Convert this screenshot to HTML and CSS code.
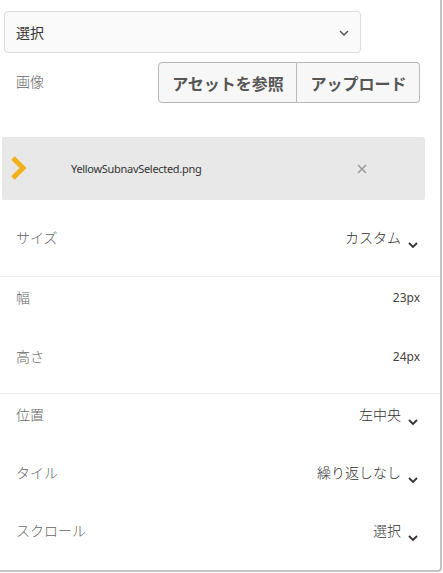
FILE: index.html
```html
<!DOCTYPE html>
<html lang="ja">
<head>
<meta charset="utf-8">
<link rel="stylesheet" href="styles.css">
</head>
<body>
<div class="panel">
  <div class="select">
    <span>選択</span>
    <svg class="sel-chev" width="12" height="8" viewBox="0 0 12 8"><path d="M2 2 L6 6 L10 2" fill="none" stroke="#555" stroke-width="1.5"/></svg>
  </div>
  <div class="image-row">
    <span class="label">画像</span>
    <div class="btns">
      <button class="btn">アセットを参照</button>
      <button class="btn">アップロード</button>
    </div>
  </div>
  <div class="file">
    <svg class="file-chev" width="18" height="24" viewBox="0 0 18 24"><path d="M3 2 L13 12 L3 22" fill="none" stroke="#f2b019" stroke-width="5"/></svg>
    <span class="fname">YellowSubnavSelected.png</span>
    <svg class="close" width="10" height="10" viewBox="0 0 10 10"><path d="M1 1 L9 9 M9 1 L1 9" stroke="#9a9a9a" stroke-width="1.5"/></svg>
  </div>
  <div class="group g1">
    <div class="row"><span class="label">サイズ</span><span class="value">カスタム<svg class="chev" width="14" height="8" viewBox="0 0 14 8"><path d="M3 2 L7 6 L11 2" fill="none" stroke="#333" stroke-width="1.8"/></svg></span></div>
  </div>
  <div class="group g2">
    <div class="row"><span class="label">幅</span><span class="num">23px</span></div>
    <div class="row"><span class="label">高さ</span><span class="num">24px</span></div>
  </div>
  <div class="group g3">
    <div class="row"><span class="label">位置</span><span class="value">左中央<svg class="chev" width="14" height="8" viewBox="0 0 14 8"><path d="M3 2 L7 6 L11 2" fill="none" stroke="#333" stroke-width="1.8"/></svg></span></div>
    <div class="row"><span class="label">タイル</span><span class="value">繰り返しなし<svg class="chev" width="14" height="8" viewBox="0 0 14 8"><path d="M3 2 L7 6 L11 2" fill="none" stroke="#333" stroke-width="1.8"/></svg></span></div>
    <div class="row"><span class="label">スクロール</span><span class="value">選択<svg class="chev" width="14" height="8" viewBox="0 0 14 8"><path d="M3 2 L7 6 L11 2" fill="none" stroke="#333" stroke-width="1.8"/></svg></span></div>
  </div>
</div>
</body>
</html>
```
FILE: styles.css
```css
* { box-sizing: border-box; }
body {
  margin: 0;
  background: #fff;
  font-family: "Noto Sans", "Noto Sans CJK JP", sans-serif;
  color: #333;
}
.panel {
  width: 442px;
  height: 572px;
  border-right: 2px solid #c4c4c4;
  border-bottom: 2px solid #c4c4c4;
  border-bottom-right-radius: 4px;
  padding-top: 11px;
  display: flex;
  flex-direction: column;
}
.select {
  margin-left: 4px;
  width: 357px;
  height: 42px;
  border: 1px solid #dcdcdc;
  border-radius: 4px;
  background: #fafafa;
  display: flex;
  align-items: center;
  justify-content: space-between;
  padding: 0 10px 0 11px;
  font-size: 14px;
  color: #333;
}
.sel-chev { margin-top: 2px; }
.image-row {
  margin-top: 9px;
  display: flex;
  align-items: center;
  padding: 0 20px 0 16px;
}
.label {
  font-size: 14px;
  font-weight: 300;
  color: #666;
}
.image-row .label { margin-top: -4px; }
.btns {
  margin-left: auto;
  display: flex;
}
.btn {
  height: 41px;
  border: 1px solid #b8b8b8;
  background: #f7f7f7;
  font-family: "Noto Sans CJK JP", sans-serif;
  font-weight: bold;
  font-size: 16px;
  color: #555;
  padding: 0 11px 0 12px;
}
.btn:first-child {
  border-radius: 4px 0 0 4px;
  width: 139px;
}
.btn:last-child {
  border-left: none;
  border-radius: 0 4px 4px 0;
  width: 123px;
}
.file {
  margin-top: 34px;
  margin-left: 2px;
  width: 423px;
  height: 63px;
  background: #e8e8e8;
  border-radius: 2px;
  display: flex;
  align-items: center;
  padding-left: 8px;
}
.file-chev { margin-top: -2px; }
.fname {
  margin-left: 43px;
  font-size: 11px;
  color: #333;
  letter-spacing: -0.3px;
}
.close {
  margin-left: auto;
  margin-right: 58px;
}
.group {
  display: flex;
  flex-direction: column;
}
.g1 { padding: 16px 0 18px; }
.g2 { border-top: 1px solid #eee; gap: 18px; padding-bottom: 16px; }
.g3 { border-top: 1px solid #eee; gap: 17px; }
.g2 .row, .g3 .row { margin-top: -1px; }
.row {
  height: 42px;
  display: flex;
  align-items: center;
  justify-content: space-between;
  padding: 0 20px 0 16px;
}
.value {
  display: flex;
  align-items: center;
  font-size: 14px;
  font-weight: 300;
  color: #333;
}
.chev {
  margin-left: 5px;
  margin-top: 16px;
}
.num {
  font-size: 12px;
  color: #444;
}
```
